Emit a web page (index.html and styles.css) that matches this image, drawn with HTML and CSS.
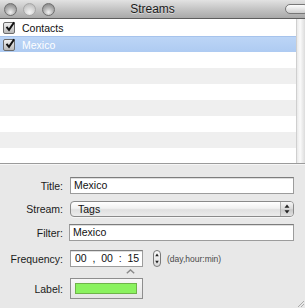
FILE: index.html
```html
<!DOCTYPE html>
<html>
<head>
<meta charset="utf-8">
<link rel="stylesheet" href="styles.css">
</head>
<body>
<div class="window">
  <div class="titlebar">
    <div class="lights">
      <span class="light"></span>
      <span class="light dim"></span>
      <span class="light"></span>
    </div>
    <div class="title">Streams</div>
    <span class="pill"></span>
  </div>
  <div class="listarea">
    <div class="list">
      <div class="row">
        <span class="check"><svg viewBox="0 0 12 12" width="12" height="12"><path d="M2.5 5.8 L5 8.8 L10.2 1.2" fill="none" stroke="#111" stroke-width="2"/></svg></span>
        <span class="name">Contacts</span>
      </div>
      <div class="row selected">
        <span class="check"><svg viewBox="0 0 12 12" width="12" height="12"><path d="M2.5 5.8 L5 8.8 L10.2 1.2" fill="none" stroke="#111" stroke-width="2"/></svg></span>
        <span class="name">Mexico</span>
      </div>
      <div class="row"></div>
      <div class="row alt"></div>
      <div class="row"></div>
      <div class="row alt"></div>
      <div class="row"></div>
      <div class="row alt"></div>
      <div class="row"></div>
    </div>
    <div class="scrolltrack"></div>
  </div>
  <div class="panel">
    <div class="field r1">
      <label class="lbl">Title:</label>
      <div class="input">Mexico</div>
    </div>
    <div class="field r2">
      <label class="lbl">Stream:</label>
      <div class="popup">
        <span class="popup-text">Tags</span>
        <span class="popup-arrows"><svg viewBox="0 0 8 12" width="8" height="12"><path d="M4 1.5 L6.5 4.8 L1.5 4.8 Z M4 10.5 L6.5 7.2 L1.5 7.2 Z" fill="#222"/></svg></span>
      </div>
    </div>
    <div class="field r3">
      <label class="lbl">Filter:</label>
      <div class="input filter">Mexico</div>
    </div>
    <div class="field r4">
      <label class="lbl">Frequency:</label>
      <div class="freq-wrap">
        <div class="input freq">00&nbsp;&nbsp;,&nbsp;&nbsp;00&nbsp;&nbsp;:&nbsp;&nbsp;15</div>
        <span class="caret"><svg viewBox="0 0 9 5" width="9" height="5"><path d="M0.8 4.3 L4.5 0.9 L8.2 4.3" fill="none" stroke="#8a8a8a" stroke-width="1.4"/></svg></span>
        <span class="stepper"><svg viewBox="0 0 8 17" width="8" height="17"><path d="M4 3.5 L5.8 6.3 L2.2 6.3 Z M4 13.5 L5.8 10.7 L2.2 10.7 Z" fill="#222"/></svg></span>
        <span class="hint">(day,hour:min)</span>
      </div>
    </div>
    <div class="field r5">
      <label class="lbl">Label:</label>
      <div class="well"><span class="swatch"></span></div>
    </div>
    <span class="grip"><svg viewBox="0 0 6 6" width="6" height="6"><path d="M0 6 L6 0 M3 6 L6 3" stroke="#999" stroke-width="0.8"/></svg></span>
  </div>
</div>
</body>
</html>
```

FILE: styles.css
```css
html, body {
  margin: 0;
  padding: 0;
  width: 305px;
  height: 308px;
  overflow: hidden;
  background: #e8e8e8;
}
.window {
  font-family: "Liberation Sans", Arial, sans-serif;
  font-size: 10.5px;
  color: #111;
  width: 305px;
  height: 308px;
  display: flex;
  flex-direction: column;
  position: relative;
}
.titlebar {
  height: 19px;
  box-sizing: border-box;
  background: linear-gradient(#e2e2e2, #c4c4c4 50%, #a9a9a9);
  border-bottom: 1px solid #5e5e5e;
  display: flex;
  align-items: center;
  position: relative;
}
.lights {
  display: flex;
  gap: 6px;
  padding-left: 4px;
}
.light {
  width: 13px;
  height: 13px;
  border-radius: 50%;
  box-sizing: border-box;
  border: 1px solid #6f6f6f;
  background: radial-gradient(circle at 50% 75%, #f2f2f2 0%, #b5b5b5 45%, #7a7a7a 100%);
}
.light.dim {
  border-color: #a6a6a6;
  background: radial-gradient(circle at 50% 75%, #f4f4f4 0%, #d3d3d3 50%, #b2b2b2 100%);
}
.title {
  position: absolute;
  left: 0;
  right: 0;
  top: 0;
  line-height: 18px;
  text-align: center;
  font-size: 12px;
  color: #1b1b1b;
  text-shadow: 0 1px 0 rgba(255,255,255,0.5);
}
.pill {
  position: absolute;
  left: 285px;
  top: 4px;
  width: 24px;
  height: 10px;
  box-sizing: border-box;
  border-radius: 6px;
  border: 1px solid #777;
  background: linear-gradient(#fdfdfd, #cfcfcf);
}
.listarea {
  display: flex;
  height: 144px;
  background: #fff;
}
.list {
  width: 296px;
  display: flex;
  flex-direction: column;
  overflow: hidden;
}
.row {
  height: 16px;
  flex: none;
  display: flex;
  align-items: center;
  background: #fff;
}
.row:first-child {
  height: 17px;
}
.row.alt {
  background: #efefef;
}
.row.selected {
  background: linear-gradient(#bcd5f6, #aecbf2);
  border-top: 1px solid #a6c3ec;
  box-sizing: border-box;
  color: #fff;
}
.check {
  width: 12px;
  height: 12px;
  margin-left: 3px;
  box-sizing: border-box;
  border: 1px solid #6c6c6c;
  border-radius: 2px;
  background: linear-gradient(#f0f0f0, #b9b9b9);
  display: flex;
  align-items: center;
  justify-content: center;
  overflow: visible;
}
.check svg {
  flex: none;
  margin-top: -2px;
  margin-left: 1px;
}
.name {
  margin-left: 7px;
  font-size: 10.5px;
}
.scrolltrack {
  flex: 1;
  background: linear-gradient(90deg, #e9e9e9, #fafafa 40%, #dcdcdc);
  border-left: 1px solid #cfcfcf;
}
.panel {
  flex: 1;
  border-top: 1px solid #9b9b9b;
  box-shadow: inset 0 1px 0 #f6f6f6;
  background: #e8e8e8;
  display: flex;
  flex-direction: column;
  padding-top: 13px;
  position: relative;
}
.field {
  display: grid;
  grid-template-columns: 63px 1fr;
  column-gap: 7px;
  align-items: center;
}
.lbl {
  text-align: right;
  color: #1a1a1a;
}
.input {
  height: 17px;
  box-sizing: border-box;
  width: 224px;
  background: #fff;
  border: 1px solid #9c9c9c;
  border-top-color: #7d7d7d;
  box-shadow: inset 0 1px 0 #dedede;
  padding-left: 3px;
  line-height: 15px;
  color: #111;
}
.r2 { margin-top: 7px; }
.r3 { margin-top: 7px; }
.r4 { margin-top: 9px; }
.r5 { margin-top: 11px; }
.filter { margin-left: -1px; width: 225px; }
.popup {
  width: 224px;
  height: 16px;
  box-sizing: border-box;
  border: 1px solid #8a8a8a;
  border-radius: 4px;
  background: linear-gradient(#ffffff, #f1f1f1 45%, #e0e0e0 55%, #ececec);
  display: flex;
  align-items: center;
  box-shadow: 0 1px 0 rgba(255,255,255,0.6);
}
.popup-text {
  flex: 1;
  padding-left: 7px;
  line-height: 14px;
}
.popup-arrows {
  width: 12px;
  height: 14px;
  border-left: 1px solid #b0b0b0;
  border-radius: 0 3px 3px 0;
  background: linear-gradient(#f6f6f6, #dadada 50%, #c9c9c9 55%, #e2e2e2);
  display: flex;
  align-items: center;
  justify-content: center;
}
.freq-wrap {
  display: flex;
  align-items: center;
  position: relative;
}
.freq {
  width: 73px;
  padding-left: 4px;
}
.caret {
  position: absolute;
  left: 56px;
  top: 19px;
  line-height: 0;
}
.stepper {
  width: 8px;
  height: 17px;
  margin-left: 10px;
  box-sizing: border-box;
  border: 1px solid #7a7a7a;
  border-radius: 4px;
  background: linear-gradient(#fbfbfb, #d9d9d9);
  display: flex;
  align-items: center;
  justify-content: center;
}
.stepper svg { flex: none; }
.hint {
  margin-left: 6px;
  font-size: 8.5px;
  color: #4a4a4a;
}
.well {
  width: 73px;
  height: 21px;
  box-sizing: border-box;
  border: 1px solid #8e8e8e;
  background: linear-gradient(#f8f8f8, #e4e4e4);
  padding: 4px 5px 4px 4px;
  display: flex;
}
.swatch {
  flex: 1;
  background: #8af25f;
  border: 1px solid #6fb34a;
}
.grip {
  position: absolute;
  right: 1px;
  bottom: 1px;
  line-height: 0;
}
```
